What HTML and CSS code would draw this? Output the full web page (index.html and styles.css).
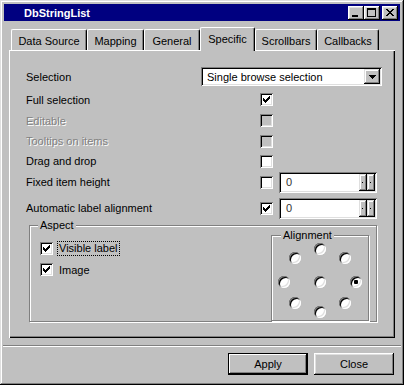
FILE: index.html
```html
<!DOCTYPE html>
<html lang="en">
<head>
  <meta charset="UTF-8" />
  <title>DbStringList</title>
  <link rel="stylesheet" href="styles.css">
</head>
<body>
  <div class="window">
    <div class="titlebar">
      <span class="title">DbStringList</span>
      <div class="caption-btns">
        <span class="cbtn"><svg width="16" height="14"><rect x="4" y="9" width="6" height="2"/></svg></span>
        <span class="cbtn"><svg width="16" height="14"><path fill-rule="evenodd" d="M3 2h9v9H3z M4 4v6h7V4z"/></svg></span>
        <span class="cbtn close"><svg width="16" height="14"><path d="M4 3h2v1H4z M10 3h2v1h-2z M5 4h2v1H5z M9 4h2v1H9z M6 5h4v1H6z M7 6h2v1H7z M6 7h4v1H6z M5 8h2v1H5z M9 8h2v1H9z M4 9h2v1H4z M10 9h2v1h-2z"/></svg></span>
      </div>
    </div>

    <div class="sheet">
      <div class="tabs">
        <div class="tab t1">Data Source</div>
        <div class="tab t2">Mapping</div>
        <div class="tab t3">General</div>
        <div class="tab t4 active">Specific</div>
        <div class="tab t5">Scrollbars</div>
        <div class="tab t6">Callbacks</div>
      </div>

      <div class="panel">
        <div class="row r1">
          <span class="lbl short">Selection</span>
          <div class="combo">
            <span class="combo-text">Single browse selection</span>
            <span class="drop"><svg width="7" height="4"><path d="M0 0h7v1H0z M1 1h5v1H1z M2 2h3v1H2z M3 3h1v1H3z"/></svg></span>
          </div>
        </div>
        <div class="row r2">
          <span class="lbl">Full selection</span>
          <span class="check"><svg width="7" height="7"><path d="M0 2h1v3H0z M1 3h1v3H1z M2 4h1v3H2z M3 3h1v3H3z M4 2h1v3H4z M5 1h1v3H5z M6 0h1v3H6z"/></svg></span>
        </div>
        <div class="row r3">
          <span class="lbl disabled">Editable</span>
          <span class="check off"></span>
        </div>
        <div class="row r4">
          <span class="lbl disabled">Tooltips on items</span>
          <span class="check off"></span>
        </div>
        <div class="row r5">
          <span class="lbl">Drag and drop</span>
          <span class="check"></span>
        </div>
        <div class="row r6">
          <span class="lbl">Fixed item height</span>
          <span class="check"></span>
          <div class="spin">
            <span class="spin-text">0</span>
            <span class="spin-btn"></span>
            <span class="spin-btn"></span>
          </div>
        </div>
        <div class="row r7">
          <span class="lbl">Automatic label alignment</span>
          <span class="check"><svg width="7" height="7"><path d="M0 2h1v3H0z M1 3h1v3H1z M2 4h1v3H2z M3 3h1v3H3z M4 2h1v3H4z M5 1h1v3H5z M6 0h1v3H6z"/></svg></span>
          <div class="spin">
            <span class="spin-text">0</span>
            <span class="spin-btn"></span>
            <span class="spin-btn"></span>
          </div>
        </div>

        <div class="group aspect">
          <span class="group-title">Aspect</span>
          <div class="aspect-checks">
            <div class="crow">
              <span class="check"><svg width="7" height="7"><path d="M0 2h1v3H0z M1 3h1v3H1z M2 4h1v3H2z M3 3h1v3H3z M4 2h1v3H4z M5 1h1v3H5z M6 0h1v3H6z"/></svg></span>
              <span class="focus">Visible label</span>
            </div>
            <div class="crow">
              <span class="check"><svg width="7" height="7"><path d="M0 2h1v3H0z M1 3h1v3H1z M2 4h1v3H2z M3 3h1v3H3z M4 2h1v3H4z M5 1h1v3H5z M6 0h1v3H6z"/></svg></span>
              <span class="clabel">Image</span>
            </div>
          </div>
          <div class="group align">
            <span class="group-title">Alignment</span>
            <span class="radio" style="left:42px; top:7px"></span>
            <span class="radio" style="left:17px; top:16px"></span>
            <span class="radio" style="left:67px; top:16px"></span>
            <span class="radio" style="left:6px; top:40px"></span>
            <span class="radio" style="left:42px; top:40px"></span>
            <span class="radio checked" style="left:78px; top:40px"></span>
            <span class="radio" style="left:17px; top:61px"></span>
            <span class="radio" style="left:67px; top:61px"></span>
            <span class="radio" style="left:42px; top:70px"></span>
          </div>
        </div>
      </div>
    </div>

    <div class="sep"></div>

    <div class="footer">
      <button class="btn default">Apply</button>
      <button class="btn">Close</button>
    </div>
  </div>
</body>
</html>
```

FILE: styles.css
```css
* { box-sizing: border-box; margin: 0; padding: 0; }
body { font-family: "Liberation Sans", Arial, sans-serif; font-size: 11px; color: #000; background: #c0c0c0; }

.window { width: 404px; height: 385px; padding: 4px; background: #c0c0c0;
  box-shadow: inset -1px -1px #000, inset 1px 1px #dfdfdf, inset -2px -2px #808080, inset 2px 2px #fff; }

.titlebar { height: 17px; background: #000080; display: flex; align-items: center; padding: 0 2px 0 20px; }
.title { color: #fff; font-weight: bold; flex: 1; }
.caption-btns { display: flex; }
.cbtn { width: 16px; height: 14px; background: #c0c0c0; display: block;
  box-shadow: inset -1px -1px #000, inset 1px 1px #fff, inset -2px -2px #808080, inset 2px 2px #dfdfdf; }
.cbtn svg { display: block; shape-rendering: crispEdges; }
.cbtn.close { margin-left: 2px; }

.sheet { margin-top: 6px; padding: 0 5px; }
.tabs { display: flex; align-items: flex-end; height: 23px; padding-left: 2px; }
.tab { height: 21px; display: flex; align-items: center; justify-content: center; padding-top: 1px;
  border-left: 1px solid #fff; border-top: 1px solid #fff; border-right: 1px solid #000;
  border-radius: 2px 2px 0 0; box-shadow: inset -1px 0 #808080; }
.tab.active { height: 24px; margin-bottom: -1px; padding-bottom: 2px; position: relative; z-index: 1; background: #c0c0c0; }
.t1 { width: 76px; }
.t2 { width: 57px; }
.t3 { width: 56px; }
.t4 { width: 55px; }
.t5 { width: 62px; }
.t6 { width: 62px; }

.panel { height: 288px; padding: 17px 0 0 17px;
  box-shadow: inset 1px 1px #fff, inset -1px -1px #000, inset -2px -2px #808080; }

.row { display: flex; align-items: center; }
.lbl { width: 234px; }
.lbl.short { width: 175px; }
.lbl.disabled { color: #808080; text-shadow: 1px 1px #fff; }
.r1 { height: 19px; }
.r2 { height: 21px; margin-top: 3px; }
.r3 { height: 21px; }
.r4 { height: 20px; }
.r5 { height: 20px; }
.r6 { height: 22px; }
.r7 { height: 22px; margin-top: 4px; }

.combo { width: 181px; height: 19px; background: #fff; display: flex; align-items: center; padding: 2px;
  box-shadow: inset 1px 1px #808080, inset -1px -1px #fff, inset 2px 2px #000, inset -2px -2px #dfdfdf; }
.combo-text { flex: 1; padding-left: 4px; }
.drop { width: 16px; height: 15px; background: #c0c0c0; display: flex; align-items: center; justify-content: center; padding-top: 1px;
  box-shadow: inset -1px -1px #000, inset 1px 1px #dfdfdf, inset -2px -2px #808080, inset 2px 2px #fff; }
.drop svg { display: block; shape-rendering: crispEdges; }

.check { width: 13px; height: 13px; background: #fff; padding: 3px; flex: none;
  box-shadow: inset 1px 1px #808080, inset -1px -1px #fff, inset 2px 2px #000, inset -2px -2px #dfdfdf; }
.check.off { background: #c0c0c0; }
.check svg { display: block; shape-rendering: crispEdges; }

.spin { width: 98px; height: 21px; margin-left: 6px; background: #fff; display: flex; padding: 2px;
  box-shadow: inset 1px 1px #808080, inset -1px -1px #fff, inset 2px 2px #000, inset -2px -2px #dfdfdf; }
.spin-text { flex: 1; padding-left: 5px; line-height: 17px; color: #333; }
.spin-btn { width: 8px; background: #c0c0c0; position: relative;
  box-shadow: inset -1px -1px #000, inset 1px 1px #dfdfdf, inset -2px -2px #808080, inset 2px 2px #fff; }
.spin-btn::after { content: ""; position: absolute; left: 3px; top: 8px; width: 1px; height: 1px; background: #000; }

.group { position: relative; border: 1px solid #808080; box-shadow: 1px 1px #fff, inset 1px 1px #fff; }
.group-title { position: absolute; top: -7px; left: 8px; padding: 0 2px; background: #c0c0c0; line-height: 13px; }
.aspect { width: 348px; height: 97px; margin: 6px 0 0 3px; display: flex; padding: 16px 7px 0 10px; }
.aspect-checks { flex: 1; }
.crow { display: flex; align-items: center; height: 13px; margin-bottom: 8px; }
.crow .check { margin-right: 5px; }
.focus { outline: 1px dotted #000; padding: 0 1px; line-height: 13px; }
.clabel { padding-left: 1px; }

.align { width: 98px; height: 86px; margin-top: -7px; }
.align .group-title { left: 9px; }
.radio { position: absolute; width: 12px; height: 12px; border-radius: 50%; background: #fff;
  box-shadow: inset 1px 1px #808080, inset -1px -1px #fff, inset 2px 2px #000, inset -2px -2px #dfdfdf; }
.radio.checked::after { content: ""; position: absolute; left: 4px; top: 4px; width: 4px; height: 4px; border-radius: 1px; background: #000; }

.sep { height: 2px; margin: 7px -1px 0; border-top: 1px solid #808080; border-bottom: 1px solid #fff; }

.footer { display: flex; justify-content: flex-end; gap: 6px; margin-top: 6px; padding-right: 6px; }
.btn { width: 80px; height: 22px; font: inherit; background: #c0c0c0; border: none; color: #000;
  box-shadow: inset -1px -1px #000, inset 1px 1px #fff, inset -2px -2px #808080, inset 2px 2px #dfdfdf; }
.btn.default { box-shadow: inset 0 0 0 1px #000, inset -2px -2px #000, inset 2px 2px #fff, inset -3px -3px #808080; }
```
